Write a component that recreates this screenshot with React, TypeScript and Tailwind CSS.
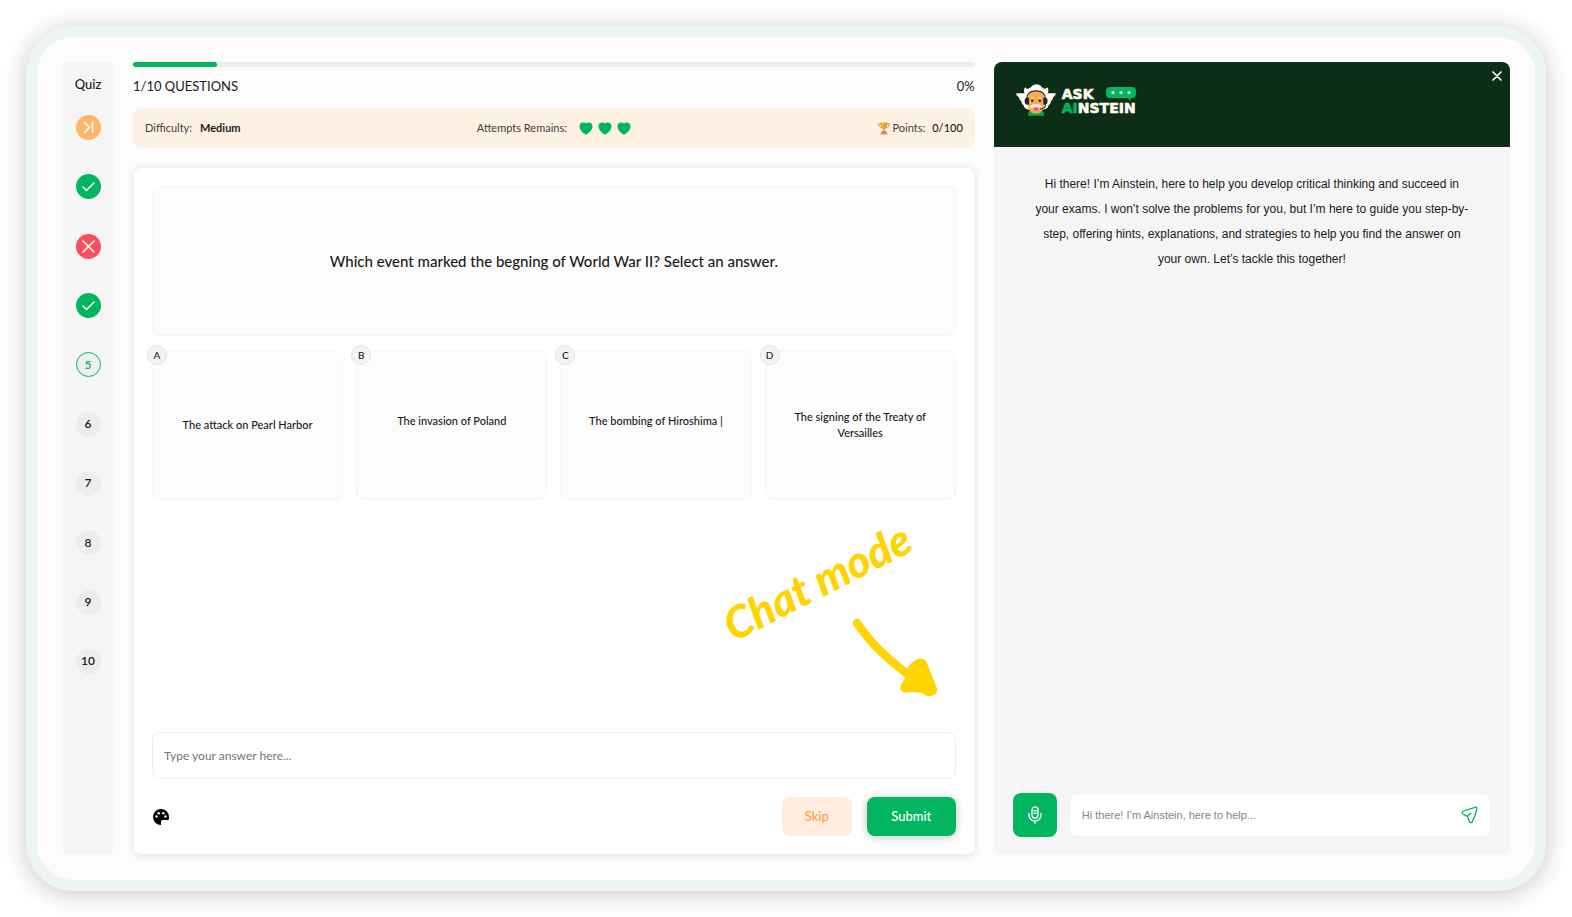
import type { ReactNode } from "react";

type StepState = "skipped" | "correct" | "wrong" | "current" | "todo";

const steps: { n: number; state: StepState }[] = [
  { n: 1, state: "skipped" },
  { n: 2, state: "correct" },
  { n: 3, state: "wrong" },
  { n: 4, state: "correct" },
  { n: 5, state: "current" },
  { n: 6, state: "todo" },
  { n: 7, state: "todo" },
  { n: 8, state: "todo" },
  { n: 9, state: "todo" },
  { n: 10, state: "todo" },
];

const stepStyles: Record<StepState, string> = {
  skipped: "bg-[#ffb566] text-white",
  correct: "bg-[#02b65f] text-white",
  wrong: "bg-[#ff4d5e] text-white",
  current: "border border-[#02b65f] bg-[#efefef] text-[#02b65f]",
  todo: "bg-[#ededed] text-[#1a1a1a]",
};

const stepIcons: Partial<Record<StepState, ReactNode>> = {
  skipped: <path d="M8.5 7.5l5 5-5 5M16.5 7.5v10" />,
  correct: <path d="M7 13l3.5 3.5 7.5-7.5" />,
  wrong: <path d="M7 7l11 11M18 7L7 18" />,
};

const answers = [
  { key: "A", text: "The attack on Pearl Harbor", pad: "" },
  { key: "B", text: "The invasion of Poland", pad: "pb-2" },
  { key: "C", text: "The bombing of Hiroshima |", pad: "pb-2" },
  { key: "D", text: "The signing of the Treaty of Versailles", pad: "" },
];

function Step({ n, state }: { n: number; state: StepState }) {
  const icon = stepIcons[state];
  return (
    <li>
      <button
        type="button"
        aria-label={`Question ${n}`}
        className={`flex size-[25px] items-center justify-center rounded-full text-xs font-semibold ${stepStyles[state]}`}
      >
        {icon ? (
          <svg viewBox="0 0 25 25" className="size-[25px]" fill="none" stroke="currentColor" strokeWidth="1.6" strokeLinecap="round" strokeLinejoin="round">
            {icon}
          </svg>
        ) : (
          n
        )}
      </button>
    </li>
  );
}

function Heart() {
  return (
    <svg viewBox="0 0 14 13" className="h-[13px] w-[14px]" fill="#02b65f">
      <path d="M7 1.6C5.6-.3.6-.2.5 4.1.4 7.700 3.800 11 7 12.800 10.200 11 13.600 7.700 13.500 4.100 13.400-.2 8.400-.3 7 1.600z" />
    </svg>
  );
}

function Trophy() {
  return (
    <svg viewBox="0 0 12 13" className="h-[13px] w-3">
      <path d="M2.500 1.800H.8c0 2.400.9 3.700 2.700 4M9.500 1.800h1.700c0 2.400-.9 3.700-2.700 4" fill="none" stroke="#c98a2b" strokeWidth=".9" />
      <path d="M2.300.6h7.400c0 3.400-.8 5.900-3 6.700v2h-1.400v-2C3.100 6.500 2.300 4 2.300.6z" fill="#dfa032" />
      <path d="M3.800 1.300h1.300v4.400C4.200 4.900 3.800 3.200 3.800 1.300z" fill="#f7cf6b" />
      <path d="M3.800 9.200h4.400l.6 1.600H3.200z" fill="#a8643a" />
      <path d="M2.500 10.800h7V12.500h-7z" fill="#c99a6c" />
    </svg>
  );
}

function Mascot() {
  return (
    <svg viewBox="0 0 40 33" className="h-[33px] w-10">
      <path
        fill="#fffbee"
        d="M0 9.500C3 9 6 9.300 8.500 9.200 7.500 6.500 8 4 9.500 3.200c.8 1.300 1.600 1.600 3 1.500C13.500 3.500 14.500 3.500 15 3.200 16.500 1 18.500.3 20.500.3s4 .8 5.300 2.900c.8.200 1.500.7 2 1.500 1.300.1 2.500-.3 3.500-1.500C32.800 4.500 32.700 7 31.600 9.200c2.700.1 5.600-.2 8.400.3-.5 2-2 3.200-3.200 3.900.2 1.600-.8 3-2 3.700.1 2-.9 3.500-2.300 4.200-.1 2.300-1.900 3.700-4.500 4.200H12c-2.600-.5-4.100-1.900-4.400-4.200-1.400-.7-2.300-2.200-2.200-4.200-1.300-.7-2.200-2.100-2.200-3.700C1.800 12.700.5 11.500 0 9.500z"
      />
      <path d="M12.800 27.500h14.600l.8 4.300H12z" fill="#02a850" />
      <path d="M12.300 14C12.300 9.500 15.500 7.800 20 7.800s7.700 1.700 7.700 6.200v8c0 5-3.200 7.500-7.700 7.500s-7.700-2.500-7.700-7.500z" fill="#fba94c" />
      <path d="M10.800 14.500C11.300 9.200 15 6.800 20 6.800s8.900 2.400 9.400 7.700" fill="none" stroke="#26262e" strokeWidth="1.200" />
      <path d="M13 13.500v7.200h-1.400a3 3.600 0 0 1 0-7.200zM27.200 13.500v7.200h1.400a3 3.600 0 0 0 0-7.200z" fill="#26262e" />
      <path d="M29.500 20.500c0 3.300-2 4.500-5.500 4.500" fill="none" stroke="#26262e" strokeWidth="1.100" />
      <path d="M14.300 14.300c.8-1.500 2.800-1.500 3.600 0zM22.300 14.300c.8-1.500 2.800-1.500 3.600 0z" fill="#fff4dd" />
      <circle cx="16.300" cy="16.700" r="1.300" fill="#26262e" />
      <circle cx="23.800" cy="16.700" r="1.300" fill="#26262e" />
      <path d="M18 22.500h4.500V25c0 2.600-4.500 2.600-4.500 0z" fill="#f0509b" />
      <path d="M20 20.600c-3-.9-5.300 0-6.200 2.800 2.300.7 4.300.1 6.200-.3 1.900.4 3.900 1 6.200.3-.9-2.800-3.200-3.700-6.200-2.800z" fill="#fffbee" />
    </svg>
  );
}

function Logo() {
  return (
    <div className="flex items-center gap-[6px]">
      <Mascot />
      <div className="flex flex-col font-['DejaVu_Sans',sans-serif] text-sm leading-[14px] font-bold text-[#fffbee] [-webkit-text-stroke:0.6px_currentColor]">
        <div className="flex items-center justify-between">
          <span>ASK</span>
          <svg viewBox="0 0 30 14" className="h-[14px] w-[30px]">
            <path d="M4 0h22a4 4 0 0 1 4 4v3a4 4 0 0 1-4 4h-1.500L24.500 14 21.500 11H4a4 4 0 0 1-4-4V4a4 4 0 0 1 4-4z" fill="#02b65f" />
            <circle cx="7" cy="5.500" r="1.500" fill="#fff" />
            <circle cx="15" cy="5.500" r="1.500" fill="#fff" />
            <circle cx="23" cy="5.500" r="1.500" fill="#fff" />
          </svg>
        </div>
        <div>
          <span className="text-[#02b65f]">AI</span>NSTEIN
        </div>
      </div>
    </div>
  );
}

function ChatModeNote() {
  return (
    <div className="pointer-events-none absolute right-[37px] bottom-[157px] h-[180px] w-[222px]" aria-hidden="true">
      <span className="absolute top-[40px] left-0 -rotate-[27deg] font-['Lato'] text-[44px] leading-[48px] font-black whitespace-nowrap text-[#ffd400] italic">
        Chat mode
      </span>
      <svg viewBox="0 0 86 80" className="absolute right-0 bottom-0 h-20 w-[86px]">
        <path d="M6 6C18 24 36 42 58 58" fill="none" stroke="#ffd400" strokeWidth="8.500" strokeLinecap="round" />
        <path d="M55 54C60 43 71 38 75 44L85.500 70C88 76 83 80 76 79 69 74 61 75 54 75.500 49 75 48 71 51 66 53 63 55 61 55 54z" fill="#ffd400" />
      </svg>
    </div>
  );
}

export default function App() {
  return (
    <div className="flex min-h-screen bg-white p-[26px] font-['Lato','Noto_Sans',sans-serif] text-[#1a1a1a]">
      <div className="flex flex-1 gap-[19px] rounded-[48px] border-[11px] border-[#ecf5f0] bg-[#fcfcfc] px-[25px] py-[25px] shadow-[0_3px_26px_rgba(0,0,0,0.22)]">
        <nav aria-label="Questions" className="flex w-[52px] shrink-0 flex-col items-center rounded-lg bg-[#f5f5f5] pt-3">
          <h2 className="text-[13px] leading-5 font-medium">Quiz</h2>
          <ol className="mt-[21px] flex h-[559px] flex-col justify-between">
            {steps.map((s) => (
              <Step key={s.n} {...s} />
            ))}
          </ol>
        </nav>

        <main className="flex min-w-0 flex-[843] flex-col">
          <div role="progressbar" aria-label="Quiz progress" aria-valuenow={10} className="h-[5px] rounded-full bg-[#ededed]">
            <div className="h-full w-1/10 rounded-full bg-[#02b65f]" />
          </div>
          <div className="mt-[9px] flex justify-between text-[13px] leading-5">
            <span>1/10 QUESTIONS</span>
            <span>0%</span>
          </div>

          <div className="mt-3 grid h-10 grid-cols-[1fr_auto_1fr] items-center rounded-lg bg-[#fdf1e4] px-3 text-[11px]">
            <p className="flex gap-2 text-[#3d3d3d]">
              Difficulty: <b className="text-[#1a1a1a]">Medium</b>
            </p>
            <p className="flex items-center gap-3 text-[#3d3d3d]">
              Attempts Remains:
              <span className="flex gap-[5px]">
                <Heart />
                <Heart />
                <Heart />
              </span>
            </p>
            <p className="flex items-center justify-end gap-[3px] text-[#3d3d3d]">
              <Trophy />
              Points: <span className="ml-1 font-medium text-[#1a1a1a]">0/100</span>
            </p>
          </div>

          <section className="relative mt-[19px] flex flex-1 flex-col rounded-lg border border-[#f3f3f3] bg-white px-[18px] pt-[18px] pb-[18px] shadow-[0_1px_7px_rgba(0,0,0,0.1)]">
            <h1 className="flex h-[150px] items-center justify-center rounded-lg border border-[#f5f5f5] bg-[#fcfcfc] text-[15px] font-medium">
              Which event marked the begning of World War II? Select an answer.
            </h1>

            <div className="mt-[14px] grid grid-cols-4 gap-[13px]">
              {answers.map((a) => (
                <button
                  key={a.key}
                  type="button"
                  className={`relative flex h-[150px] items-center justify-center rounded-lg border border-[#f5f5f5] bg-[#fcfcfc] px-6 text-[11px] leading-4 font-medium ${a.pad}`}
                >
                  <span className="absolute -top-[6px] -left-[6px] flex size-5 items-center justify-center rounded-full border border-[#e3e3e6] bg-[#f3f3f5] text-[10px]">
                    {a.key}
                  </span>
                  {a.text}
                </button>
              ))}
            </div>

            <ChatModeNote />

            <input
              type="text"
              aria-label="Your answer"
              placeholder="Type your answer here..."
              className="mt-auto h-[47px] rounded-lg border border-[#efefef] bg-white px-[11px] text-xs placeholder:text-[#757575]"
            />
            <div className="mt-[18px] flex items-center gap-[15px]">
              <button type="button" aria-label="Colours" className="mr-auto">
                <svg viewBox="0 0 18 18" className="size-[18px]">
                  <path d="M9 1a8 8 0 1 0 0 16V13.500Q9 12 10.500 12H15.500Q17 12 17 10.500V9A8 8 0 0 0 9 1z" fill="#000" />
                  <g fill="#fff">
                    <circle cx="4.500" cy="8.500" r="1.200" />
                    <circle cx="6.700" cy="5.200" r="1.200" />
                    <circle cx="11.300" cy="5.200" r="1.200" />
                    <circle cx="13.500" cy="8.500" r="1.200" />
                  </g>
                </svg>
              </button>
              <button type="button" className="h-[39px] w-[70px] rounded-lg bg-[#ffeedd] text-[13px] text-[#ff9a2e]">
                Skip
              </button>
              <button type="button" className="h-[39px] w-[89px] rounded-lg bg-[#02b65f] text-[13px] font-medium text-white shadow-[0_1px_8px_rgba(0,0,0,0.25)]">
                Submit
              </button>
            </div>
          </section>
        </main>

        <aside className="flex min-w-0 flex-[517] flex-col overflow-hidden rounded-lg bg-[#f5f5f5] font-['Liberation_Sans',sans-serif]">
          <header className="flex h-[85px] items-start justify-between bg-[#0c2e17] pt-[22px] pl-[22px]">
            <Logo />
            <button type="button" aria-label="Close" className="-mt-[13px] mr-2">
              <svg viewBox="0 0 10 10" className="size-[10px]" fill="none" stroke="#fff" strokeWidth="1.700" strokeLinecap="round">
                <path d="M1 1l8 8M9 1L1 9" />
              </svg>
            </button>
          </header>
          <p className="mt-[25px] px-10 text-center text-xs leading-[25px]">
            Hi there! I’m Ainstein, here to help you develop critical thinking and succeed in your exams. I won’t solve the problems for you, but I’m here to guide you step-by-step, offering hints, explanations, and strategies to help you find the answer on your own. Let’s tackle this together!
          </p>
          <form className="mt-auto flex gap-3 px-[19px] pb-[18px]" onSubmit={(e) => e.preventDefault()}>
            <button type="button" aria-label="Voice message" className="flex h-11 w-11 items-center justify-center rounded-lg bg-[#02b65f]">
              <svg viewBox="0 0 16 18" className="h-[18px] w-4" fill="none" stroke="#fff" strokeWidth="1.300" strokeLinecap="round">
                <rect x="5" y="1" width="6" height="11" rx="3" />
                <path d="M2 7.500v1.500a6 6 0 0 0 12 0V7.500M8 15v2.300M6.800 4.700h2.600M6.800 7.200h2.600" />
              </svg>
            </button>
            <div className="flex h-11 flex-1 items-center rounded-lg border border-[#f2f2f2] bg-white pr-3 pl-3">
              <input
                type="text"
                aria-label="Message"
                placeholder="Hi there! I’m Ainstein, here to help..."
                className="min-w-0 flex-1 text-[11px] outline-none placeholder:text-[#858585]"
              />
              <button type="submit" aria-label="Send">
                <svg viewBox="0 0 17 18" className="h-[18px] w-[17px]" fill="none" stroke="#02b65f" strokeWidth="1.300" strokeLinecap="round" strokeLinejoin="round">
                  <path d="M14 1.300L2.500 5C.8 5.700.8 7.500 2.300 8.300L5.500 9.900C6.200 10.300 6.700 10.900 6.900 11.700L8.300 15.500C8.900 17.100 10.700 17 11.400 15.500 13.500 11.500 15 7 15.800 3 16 1.700 15.300 1 14 1.300zM6.400 10.300L9.500 7.500" />
                </svg>
              </button>
            </div>
          </form>
        </aside>
      </div>
    </div>
  );
}
